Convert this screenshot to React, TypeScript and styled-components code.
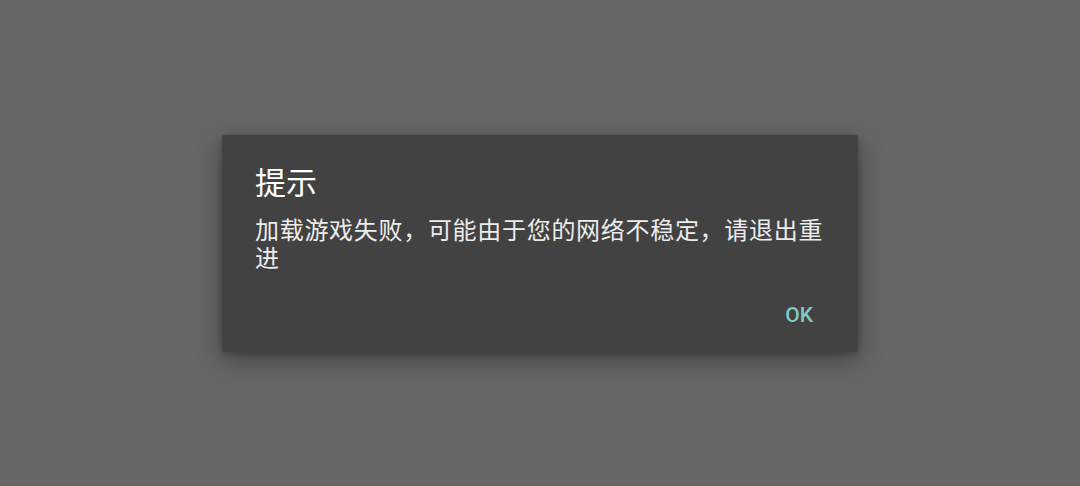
import React from 'react';
import styled, { createGlobalStyle } from 'styled-components';

const GlobalStyle = createGlobalStyle`
  html, body {
    margin: 0;
    padding: 0;
    height: 100%;
    background: #666666;
  }
  #root {
    height: 100%;
  }
`;

const Screen = styled.div`
  width: 1080px;
  height: 486px;
  display: flex;
  align-items: center;
  justify-content: center;
  background: #666666;
  font-family: 'Noto Sans', 'Noto Sans CJK SC', sans-serif;
`;

const Dialog = styled.div`
  width: 636px;
  height: 217px;
  box-sizing: border-box;
  padding: 29px 33px 19px 33px;
  background: #424242;
  border-radius: 2px;
  box-shadow: 0 8px 24px rgba(0, 0, 0, 0.35), 0 2px 6px rgba(0, 0, 0, 0.2);
  display: flex;
  flex-direction: column;
`;

const Title = styled.div`
  font-size: 31px;
  line-height: 36px;
  font-weight: 400;
  color: #ffffff;
`;

const Message = styled.div`
  margin-top: 16px;
  font-size: 24px;
  line-height: 28px;
  letter-spacing: 0.7px;
  color: #ececec;
`;

const Actions = styled.div`
  margin-top: auto;
  display: flex;
  justify-content: flex-end;
`;

const Button = styled.button`
  height: 36px;
  padding: 0 12px;
  border: none;
  background: transparent;
  color: #80cbc4;
  font-family: 'Roboto', 'Noto Sans', sans-serif;
  font-size: 21px;
  font-weight: 500;
  cursor: pointer;
`;

export default function App() {
  return (
    <>
      <GlobalStyle />
      <Screen>
        <Dialog>
          <Title>提示</Title>
          <Message>加载游戏失败，可能由于您的网络不稳定，请退出重进</Message>
          <Actions>
            <Button>OK</Button>
          </Actions>
        </Dialog>
      </Screen>
    </>
  );
}
